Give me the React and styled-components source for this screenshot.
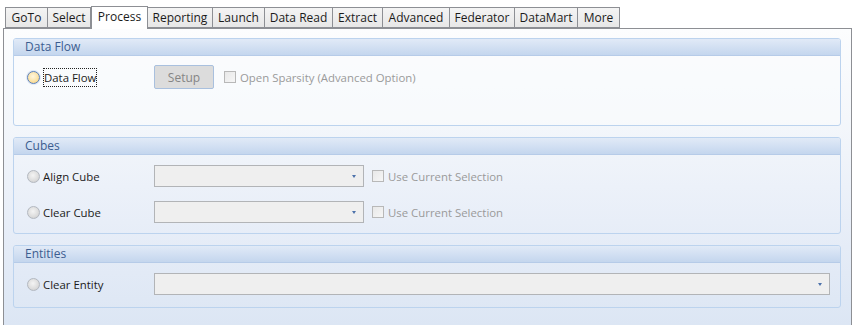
import React from "react";
import styled, { createGlobalStyle } from "styled-components";

const GlobalStyle = createGlobalStyle`
  html, body {
    margin: 0;
    padding: 0;
    background: #ffffff;
  }
  body {
    font-family: "Open Sans", "Noto Sans", sans-serif;
    font-size: 11.4px;
    color: #1e1e1e;
  }
`;

const Page = styled.div`
  width: 855px;
  height: 325px;
  overflow: hidden;
  background: #ffffff;
`;

const TabStrip = styled.div`
  display: flex;
  align-items: flex-end;
  height: 28px;
  padding-left: 5px;
  position: relative;
  z-index: 1;
`;

const Tab = styled.div`
  box-sizing: border-box;
  width: ${(p) => p.$w}px;
  height: ${(p) => (p.$active ? 23 : 21)}px;
  margin-bottom: ${(p) => (p.$active ? -1 : 0)}px;
  border: 1px solid #8d8f94;
  border-left: ${(p) => (p.$first || p.$active ? "1px solid #8d8f94" : "none")};
  border-bottom: ${(p) => (p.$active ? "none" : "1px solid #8d8f94")};
  background: ${(p) =>
    p.$active ? "#ffffff" : "linear-gradient(#f4f4f4, #e7e7e7)"};
  display: flex;
  align-items: center;
  justify-content: center;
  padding-bottom: ${(p) => (p.$active ? 3 : 1)}px;
  font-size: 12px;
  color: #1b1b1b;
  white-space: nowrap;
`;

const Panel = styled.div`
  box-sizing: border-box;
  margin-left: 3px;
  width: 849px;
  height: 297px;
  border: 1px solid #8d8f94;
  border-bottom: none;
  background: linear-gradient(#fcfdfe 0%, #f4f7fb 30%, #e8eef8 65%, #dce6f4 100%);
  padding: 9px 10px 0 9px;
  display: flex;
  flex-direction: column;
  gap: 11px;
`;

const Group = styled.div`
  box-sizing: border-box;
  height: ${(p) => p.$h}px;
  border: 1px solid #bcd3ee;
  border-radius: 3px;
  overflow: hidden;
  background: ${(p) => p.$bg || "transparent"};
`;

const GroupHeader = styled.div`
  height: 16px;
  line-height: 16px;
  padding-left: 11px;
  background: linear-gradient(#e1eaf7, #c4d6ee);
  border-bottom: 1px solid #b6cbe8;
  color: #3c5d90;
  font-size: 12px;
`;

const GroupBody = styled.div`
  display: flex;
  flex-direction: column;
  gap: ${(p) => p.$gap || 0}px;
  padding: ${(p) => p.$pad || "9px 10px 0 13px"};
`;

const Row = styled.div`
  display: grid;
  grid-template-columns: 127px auto auto 1fr;
  align-items: center;
  height: ${(p) => p.$h || 22}px;
`;

const RadioLabel = styled.div`
  display: flex;
  align-items: center;
  gap: 3px;
`;

const Radio = styled.span`
  box-sizing: border-box;
  width: 13px;
  height: 13px;
  border-radius: 50%;
  border: 1px solid ${(p) => (p.$hot ? "#5b7fb8" : "#b3b8c0")};
  background: ${(p) =>
    p.$hot
      ? "radial-gradient(circle at 45% 40%, #fff6df 0%, #fbe3a8 55%, #f2c96c 100%)"
      : "radial-gradient(circle at 45% 40%, #f4f4f4 0%, #dcdcdc 60%, #c6c6c6 100%)"};
  box-shadow: ${(p) => (p.$hot ? "0 0 0 1px #dfe9f7" : "none")};
`;

const LabelText = styled.span`
  color: #1b1b1b;
  padding: ${(p) => (p.$focus ? "2px 1px" : "0")};
  outline: ${(p) => (p.$focus ? "1px dotted #222" : "none")};
  outline-offset: -1px;
`;

const Button = styled.div`
  box-sizing: border-box;
  width: 60px;
  height: 24px;
  border: 1px solid #a9c0de;
  border-radius: 2px;
  background: #dcdcdc;
  color: #858585;
  font-size: 12px;
  display: flex;
  align-items: center;
  justify-content: center;
`;

const Check = styled.label`
  display: flex;
  align-items: center;
  gap: 4px;
  margin-left: ${(p) => p.$ml}px;
  color: #9a9a9a;
  white-space: nowrap;
`;

const Box = styled.span`
  box-sizing: border-box;
  width: 12px;
  height: 12px;
  border: 1px solid #b8b8b8;
  background: linear-gradient(135deg, #e8e8e8, #f6f6f6);
`;

const Combo = styled.div`
  box-sizing: border-box;
  width: ${(p) => p.$w}px;
  height: 22px;
  border: 1px solid #b2b4b7;
  background: #efefef;
  display: flex;
  align-items: center;
  justify-content: flex-end;
  padding-right: 7px;
`;

const Arrow = styled.span`
  width: 0;
  height: 0;
  border-left: 2.5px solid transparent;
  border-right: 2.5px solid transparent;
  border-top: 3px solid #4d72ab;
`;

const tabs = [
  ["GoTo", 43],
  ["Select", 43],
  ["Process", 57],
  ["Reporting", 65],
  ["Launch", 52],
  ["Data Read", 68],
  ["Extract", 50],
  ["Advanced", 67],
  ["Federator", 65],
  ["DataMart", 63],
  ["More", 42],
];

const CubeRow = ({ label }) => (
  <Row>
    <RadioLabel>
      <Radio />
      <LabelText>{label}</LabelText>
    </RadioLabel>
    <Combo $w={210}>
      <Arrow />
    </Combo>
    <Check $ml={8}>
      <Box />
      Use Current Selection
    </Check>
  </Row>
);

export default function App() {
  return (
    <Page>
      <GlobalStyle />
      <TabStrip>
        {tabs.map(([name, w], i) => (
          <Tab key={name} $w={w} $first={i === 0} $active={name === "Process"}>
            {name}
          </Tab>
        ))}
      </TabStrip>
      <Panel>
        <Group $h={88} $bg="rgba(250,251,254,0.6)">
          <GroupHeader>Data Flow</GroupHeader>
          <GroupBody $pad="9px 10px 0 13px">
            <Row $h={24}>
              <RadioLabel>
                <Radio $hot />
                <LabelText $focus>Data Flow</LabelText>
              </RadioLabel>
              <Button>Setup</Button>
              <Check $ml={10}>
                <Box />
                Open Sparsity (Advanced Option)
              </Check>
            </Row>
          </GroupBody>
        </Group>
        <Group $h={97}>
          <GroupHeader>Cubes</GroupHeader>
          <GroupBody $gap={14} $pad="10px 10px 0 13px">
            <CubeRow label="Align Cube" />
            <CubeRow label="Clear Cube" />
          </GroupBody>
        </Group>
        <Group $h={63}>
          <GroupHeader>Entities</GroupHeader>
          <GroupBody $pad="10px 10px 0 13px">
            <Row>
              <RadioLabel>
                <Radio />
                <LabelText>Clear Entity</LabelText>
              </RadioLabel>
              <Combo $w={676} style={{ gridColumn: "2 / 5" }}>
                <Arrow />
              </Combo>
            </Row>
          </GroupBody>
        </Group>
      </Panel>
    </Page>
  );
}
